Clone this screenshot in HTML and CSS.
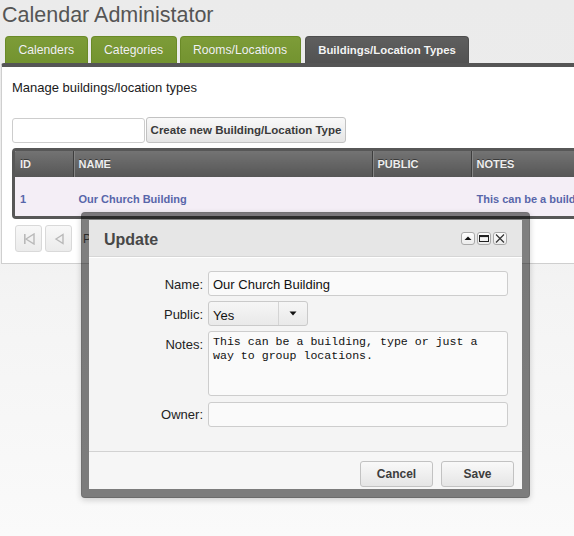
FILE: index.html
```html
<!DOCTYPE html>
<html>
<head>
<meta charset="utf-8">
<title>Calendar Administator</title>
<link rel="stylesheet" href="styles.css">
</head>
<body>
<div class="page">
  <h1 class="title">Calendar Administator</h1>
  <nav class="tabs">
    <a class="tab">Calenders</a>
    <a class="tab">Categories</a>
    <a class="tab">Rooms/Locations</a>
    <a class="tab active">Buildings/Location Types</a>
  </nav>
  <section class="panel">
    <p class="intro">Manage buildings/location types</p>
    <div class="toolbar">
      <input class="search" type="text">
      <button class="btn create">Create new Building/Location Type</button>
    </div>
    <div class="grid-wrap">
      <table class="grid">
        <colgroup><col class="c-id"><col class="c-name"><col class="c-public"><col class="c-notes"></colgroup>
        <thead>
          <tr><th>ID</th><th>NAME</th><th>PUBLIC</th><th>NOTES</th></tr>
        </thead>
        <tbody>
          <tr><td>1</td><td>Our Church Building</td><td></td><td>This can be a building, type or just a way to group locations.</td></tr>
        </tbody>
      </table>
    </div>
    <div class="pager">
      <span class="pbtn"><svg width="14" height="12" viewBox="0 0 14 12"><rect x="2" y="1" width="1.6" height="10" fill="#b9b9b9"/><path d="M4 6 L12 1 L12 11 Z" fill="none" stroke="#b9b9b9" stroke-width="1.4"/></svg></span>
      <span class="pbtn"><svg width="14" height="12" viewBox="0 0 14 12"><path d="M4 6 L11 1.5 L11 10.5 Z" fill="none" stroke="#b9b9b9" stroke-width="1.4"/></svg></span>
      <span class="pinfo">Page 1 of 1</span>
    </div>
  </section>
</div>

<div class="dialog">
  <div class="dlg-head">
    <span class="dlg-title">Update</span>
    <div class="dlg-tools">
      <span class="tbtn"><svg width="12" height="11" viewBox="0 0 12 11"><path d="M2.5 7 L6 3.5 L9.5 7 Z" fill="#111"/></svg></span>
      <span class="tbtn"><svg width="12" height="11" viewBox="0 0 12 11"><rect x="1.5" y="2.5" width="9" height="6" fill="none" stroke="#222" stroke-width="1"/><rect x="1.5" y="2.5" width="9" height="1.6" fill="#222"/></svg></span>
      <span class="tbtn"><svg width="12" height="11" viewBox="0 0 12 11"><path d="M2 1.5 L10 9.5 M10 1.5 L2 9.5" stroke="#333" stroke-width="1.2"/></svg></span>
    </div>
  </div>
  <div class="dlg-body">
    <label class="lbl">Name:</label>
    <input class="field" type="text" value="Our Church Building">
    <label class="lbl">Public:</label>
    <div class="select">
      <span class="sel-val">Yes</span>
      <span class="sel-arrow"><svg width="8" height="5" viewBox="0 0 8 5"><path d="M0.5 0.5 L7.5 0.5 L4 4.5 Z" fill="#111"/></svg></span>
    </div>
    <label class="lbl">Notes:</label>
    <textarea class="notes">This can be a building, type or just a way to group locations.</textarea>
    <label class="lbl">Owner:</label>
    <input class="field" type="text" value="">
  </div>
  <div class="dlg-foot">
    <button class="btn fbtn">Cancel</button>
    <button class="btn fbtn">Save</button>
  </div>
</div>
</body>
</html>
```

FILE: styles.css
```css
html, body {
  margin: 0;
  padding: 0;
  height: 100%;
  overflow: hidden;
}

body {
  background: linear-gradient(#ebebeb 0px, #ececec 120px, #f4f4f4 300px, #fafafa 536px);
  font-family: "Liberation Sans", Arial, sans-serif;
  color: #222;
  position: relative;
}

.page {
  width: 680px;
}

.title {
  margin: 0;
  padding-left: 2px;
  font-size: 21.5px;
  font-weight: normal;
  line-height: 30px;
  color: #555;
}

.tabs {
  display: flex;
  gap: 3px;
  margin-top: 6px;
  padding-left: 5px;
  height: 27px;
}

.tab {
  display: block;
  height: 27px;
  box-sizing: border-box;
  padding: 0 12.5px;
  line-height: 26px;
  font-size: 12.2px;
  color: #f2f2f2;
  background: linear-gradient(#7d9c38, #739330);
  border: 1px solid #6a8a28;
  border-bottom: none;
  border-radius: 4px 4px 0 0;
  text-shadow: 0 0 1px rgba(0,0,0,0.15);
}

.tab.active {
  margin-left: 1px;
  background: linear-gradient(#5f5f5f, #525252);
  border-color: #4e4e4e;
  font-weight: bold;
  font-size: 11.4px;
  color: #f4f4f4;
  padding: 0 12.5px;
}

.panel {
  margin-left: 1px;
  background: #fff;
  border-top: 4px solid #555;
  border-left: 1px solid #cfcfcf;
  border-bottom: 1px solid #cfcfcf;
  border-radius: 3px 0 0 0;
  padding: 13px 0 11px 10px;
}

.intro {
  margin: 0;
  font-size: 13px;
  line-height: 15px;
  color: #1a1a1a;
}

.toolbar {
  display: flex;
  align-items: flex-start;
  margin-top: 22px;
}

.search {
  margin: 1px 1px 0 0;
  width: 133px;
  height: 25px;
  box-sizing: border-box;
  border: 1px solid #cdcdcd;
  border-radius: 3px;
  background: #fff;
  padding: 0 4px;
  font-family: inherit;
}

.btn {
  font-family: "Liberation Sans", Arial, sans-serif;
  font-weight: bold;
  color: #3a3a3a;
  background: linear-gradient(#f9f9f9, #e5e5e5);
  border: 1px solid #c2c2c2;
  border-radius: 3px;
  cursor: pointer;
}

.create {
  width: 200px;
  height: 26px;
  padding: 0;
  font-size: 11.5px;
}

.grid-wrap {
  margin-top: 5px;
  display: block;
  width: fit-content;
  border: 3px solid #575757;
  border-radius: 4px;
  overflow: hidden;
  background: #f4eef6;
}

.grid {
  border-collapse: collapse;
  table-layout: fixed;
  width: 620px;
}

.c-id { width: 58px; }
.c-name { width: 299px; }
.c-public { width: 99px; }
.c-notes { width: 164px; }

.grid th {
  height: 26px;
  padding: 0 5px;
  text-align: left;
  font-size: 11px;
  font-weight: bold;
  color: #eeeeee;
  text-shadow: 0 -1px 0 #3a3a3a;
  background: linear-gradient(#737373, #565656);
}

.grid th + th {
  border-left: 1px solid #3e3e3e;
  box-shadow: inset 1px 0 0 #858585;
}

.grid td {
  height: 39px;
  box-sizing: border-box;
  padding: 4px 5px 0 5px;
  font-size: 11px;
  font-weight: bold;
  color: #5866aa;
  background: #f4eef6;
  white-space: nowrap;
  overflow: hidden;
}

.grid td + td {
  border-left: 1px solid transparent;
}

.pager {
  display: flex;
  align-items: center;
  gap: 3px;
  margin: 6px 0 0 3px;
}

.pbtn {
  display: flex;
  align-items: center;
  justify-content: center;
  width: 27px;
  height: 27px;
  box-sizing: border-box;
  border: 1px solid #d9d9d9;
  border-radius: 3px;
  background: linear-gradient(#f8f8f8, #ebebeb);
}

.pinfo {
  margin-left: 8px;
  font-size: 12px;
  color: #555;
}

/* Dialog */
.dialog {
  position: absolute;
  left: 81px;
  top: 212px;
  width: 433px;
  border: 8px solid rgba(0, 0, 0, 0.5);
  border-bottom-width: 9px;
  border-radius: 4px;
  background: #f4f4f4;
  background-clip: padding-box;
  box-shadow: 0 2px 6px rgba(0, 0, 0, 0.18);
}

.dlg-head {
  display: flex;
  align-items: center;
  justify-content: space-between;
  height: 37px;
  box-sizing: border-box;
  padding: 3px 15px 0 15px;
  background: #e6e6e6;
  border-bottom: 1px solid #d6d6d6;
  box-shadow: 0 1px 0 #fff;
}

.dlg-title {
  font-size: 16px;
  font-weight: bold;
  color: #474747;
}

.dlg-tools {
  display: flex;
  gap: 2px;
  margin-top: -3px;
}

.tbtn {
  display: flex;
  align-items: center;
  justify-content: center;
  width: 14px;
  height: 13px;
  box-sizing: border-box;
  border: 1px solid #a9a9a9;
  border-radius: 3px;
  background: linear-gradient(#fdfdfd, #ececec);
}

.dlg-body {
  display: grid;
  grid-template-columns: 114px 300px;
  column-gap: 5px;
  row-gap: 5px;
  padding: 14px 0 24px 0;
}

.lbl {
  text-align: right;
  font-size: 13px;
  line-height: 15px;
  padding-top: 6px;
  color: #222;
}

.field {
  width: 300px;
  height: 25px;
  box-sizing: border-box;
  margin: 0;
  border: 1px solid #cdcdcd;
  border-radius: 3px;
  background: #fafafa;
  padding: 2px 4px 0 4px;
  font-family: "Liberation Sans", Arial, sans-serif;
  font-size: 13px;
  color: #111;
}

.field:last-child {
  margin-top: 1px;
}

.select {
  display: flex;
  width: 100px;
  height: 25px;
  box-sizing: border-box;
  border: 1px solid #cacaca;
  border-radius: 3px;
  background: linear-gradient(#f6f6f6, #e9e9e9);
  font-size: 13px;
  color: #111;
}

.sel-val {
  width: 70px;
  box-sizing: border-box;
  padding: 6px 0 0 4px;
  border-right: 1px solid #d4d4d4;
}

.sel-arrow {
  flex: 1;
  display: flex;
  align-items: center;
  justify-content: center;
}

.notes {
  width: 300px;
  height: 65px;
  box-sizing: border-box;
  margin: 0;
  border: 1px solid #cdcdcd;
  border-radius: 3px;
  background: #fafafa;
  padding: 3px 4px;
  font-family: "Liberation Mono", "Courier New", monospace;
  font-size: 11.6px;
  line-height: 14px;
  color: #111;
  resize: none;
  overflow: hidden;
}

.dlg-foot {
  display: flex;
  justify-content: flex-end;
  gap: 8px;
  height: 38px;
  box-sizing: border-box;
  padding: 9px 8px 0 0;
  border-top: 1px solid #d2d2d2;
  background: #f6f6f6;
}

.fbtn {
  width: 73px;
  height: 26px;
  padding: 0;
  font-size: 12px;
  color: #3d3d3d;
}
```
